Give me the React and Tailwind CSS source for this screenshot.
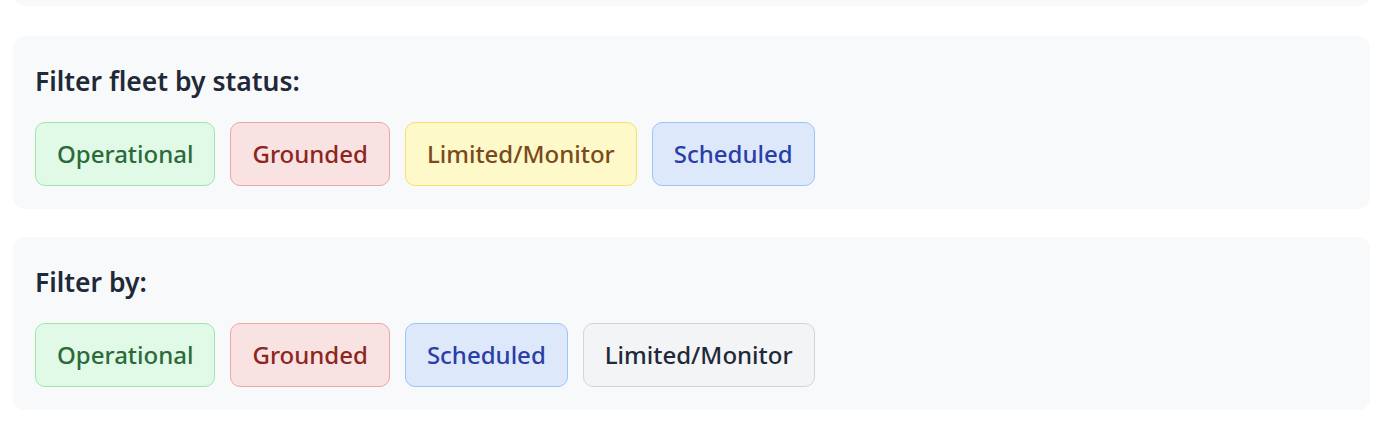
const fleetFilters = [
  { label: "Operational", tone: "green" },
  { label: "Grounded", tone: "red" },
  { label: "Limited/Monitor", tone: "yellow" },
  { label: "Scheduled", tone: "blue" },
];

const simpleFilters = [
  { label: "Operational", tone: "green" },
  { label: "Grounded", tone: "red" },
  { label: "Scheduled", tone: "blue" },
  { label: "Limited/Monitor", tone: "gray" },
];

const toneClasses = {
  green: "bg-[#e1f9e7] border-[#9fe6ad] text-[#2c6a3a]",
  red: "bg-[#f9e2e2] border-[#f1a5a5] text-[#8c2621]",
  yellow: "bg-[#fef9c8] border-[#f9df6c] text-[#7a4a1d]",
  blue: "bg-[#dde8fb] border-[#9cc4f8] text-[#2a3ea6]",
  gray: "bg-[#f3f4f6] border-[#d3d5d9] text-[#1f2937]",
};

function FilterButton({ label, tone }) {
  return (
    <button
      className={
        "h-[64px] px-[21px] rounded-[10px] border text-[24px] font-medium leading-none " +
        toneClasses[tone]
      }
    >
      {label}
    </button>
  );
}

function FilterCard({ title, filters }) {
  return (
    <div className="bg-[#f8f9fb] rounded-[12px] px-[22px] pt-[26px] pb-[23px]">
      <h3 className="text-[26.5px] font-semibold leading-[38px] text-[#1f2937]">{title}</h3>
      <div className="flex gap-[15px] mt-[22px]">
        {filters.map((f) => (
          <FilterButton key={f.label} label={f.label} tone={f.tone} />
        ))}
      </div>
    </div>
  );
}

export default function App() {
  return (
    <div
      className="bg-white w-full h-[436px] overflow-hidden px-[13px] pr-[12px]"
      style={{ fontFamily: '"Noto Sans", "Open Sans", sans-serif' }}
    >
      <div className="bg-[#f8f9fb] rounded-[12px] h-[40px] -mt-[34px]" />
      <div className="flex flex-col gap-[28px] mt-[30px]">
        <FilterCard title="Filter fleet by status:" filters={fleetFilters} />
        <FilterCard title="Filter by:" filters={simpleFilters} />
      </div>
    </div>
  );
}
